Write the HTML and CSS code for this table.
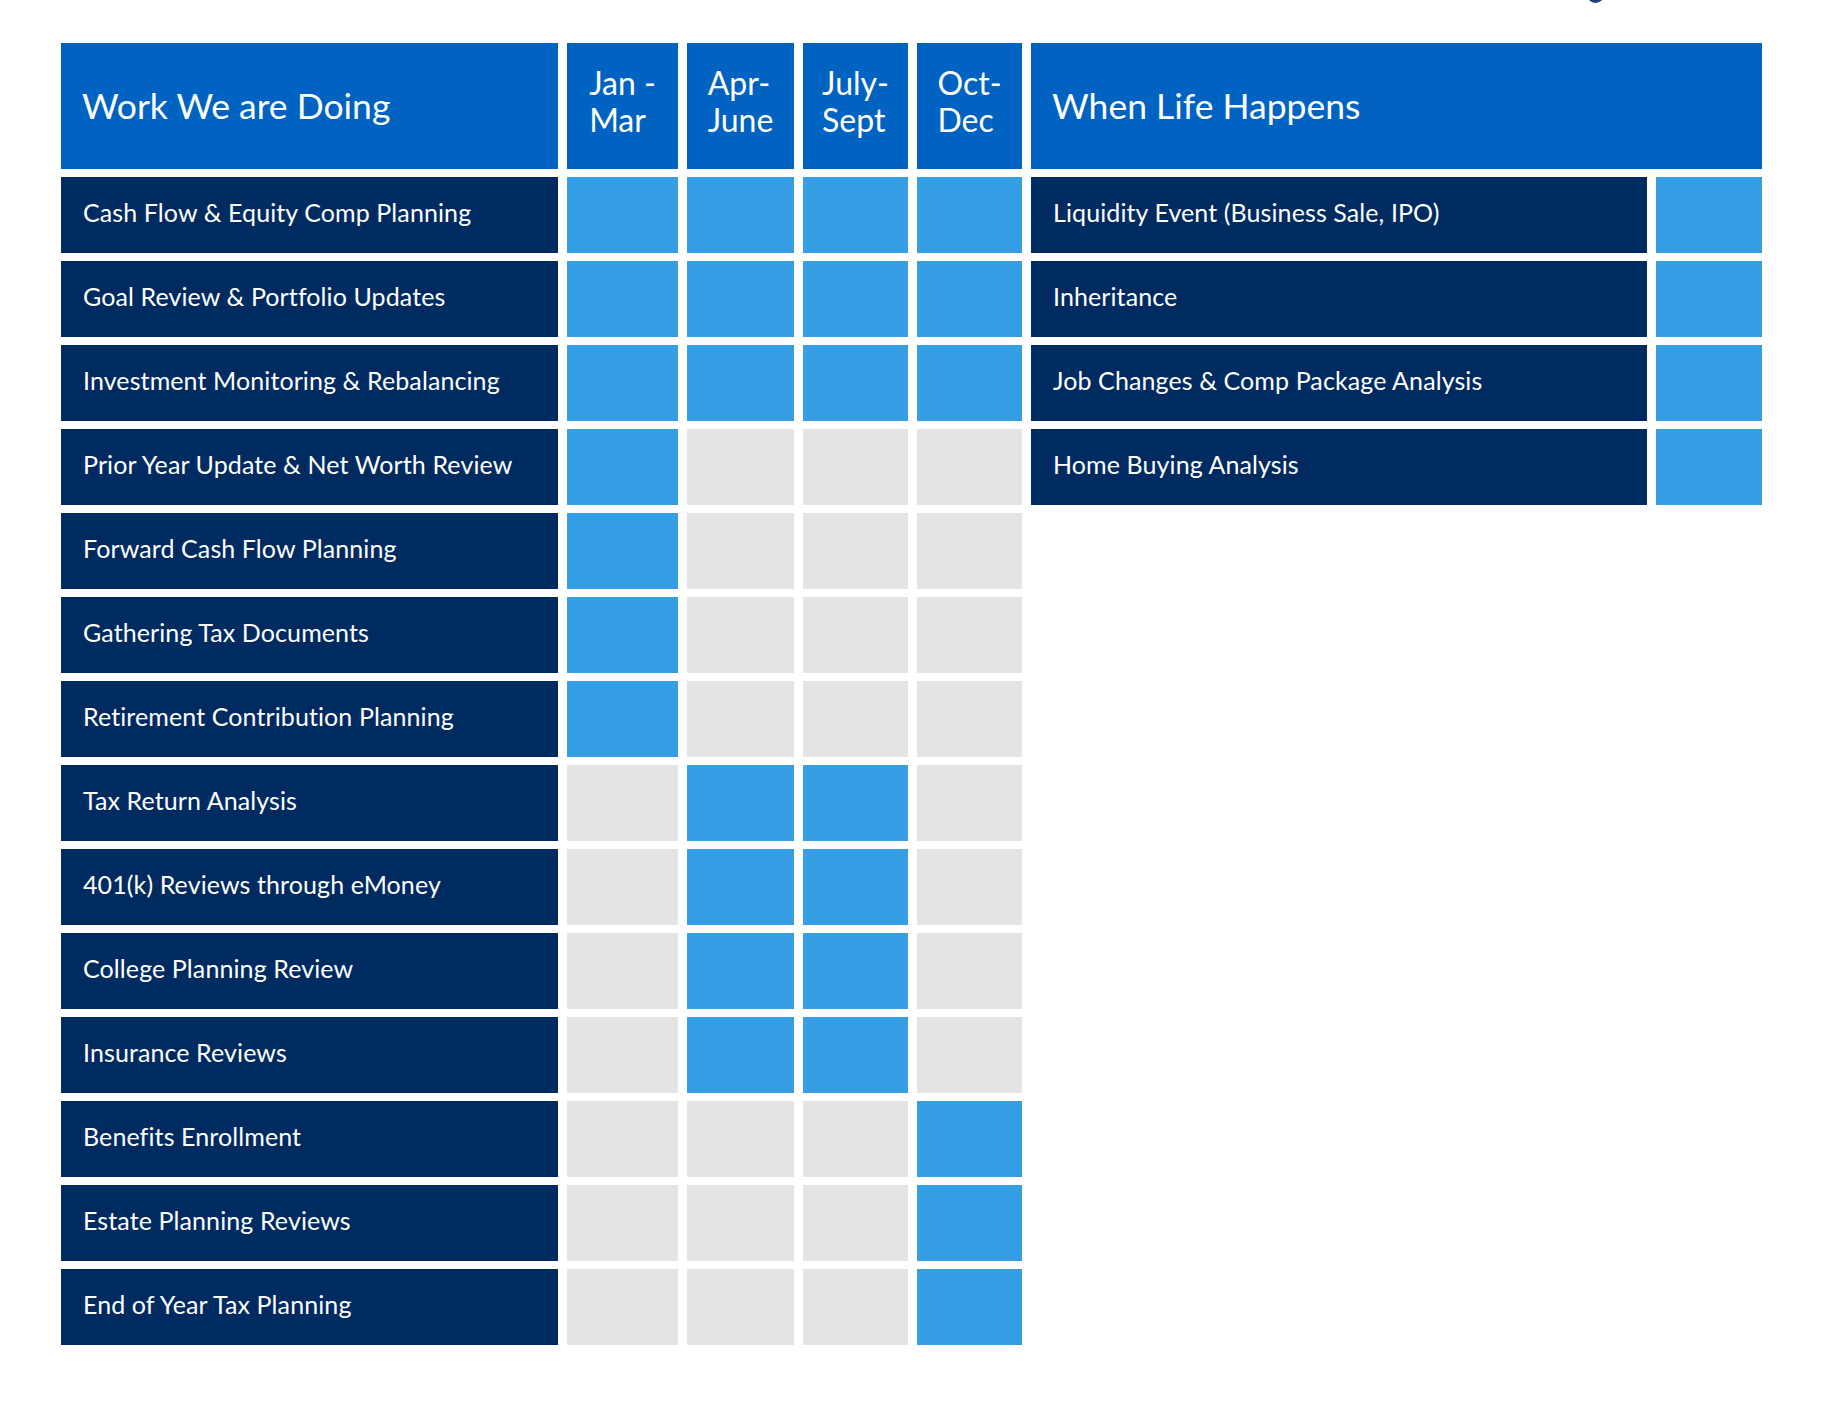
FILE: index.html
```html
<!DOCTYPE html>
<html lang="en">
<head>
<meta charset="utf-8">
<title>Work We are Doing</title>
<link rel="stylesheet" href="styles.css">
</head>
<body>
<div class="logo-fragment"></div>
<main class="chart">
  <section class="work">
    <div class="head head-title">Work We are Doing</div>
    <div class="head head-month"><span>Jan -<br>Mar</span></div>
    <div class="head head-month"><span>Apr-<br>June</span></div>
    <div class="head head-month"><span>July-<br>Sept</span></div>
    <div class="head head-month"><span>Oct-<br>Dec</span></div>

    <div class="name">Cash Flow &amp; Equity Comp Planning</div>
    <div class="cell on"></div><div class="cell on"></div><div class="cell on"></div><div class="cell on"></div>

    <div class="name">Goal Review &amp; Portfolio Updates</div>
    <div class="cell on"></div><div class="cell on"></div><div class="cell on"></div><div class="cell on"></div>

    <div class="name">Investment Monitoring &amp; Rebalancing</div>
    <div class="cell on"></div><div class="cell on"></div><div class="cell on"></div><div class="cell on"></div>

    <div class="name">Prior Year Update &amp; Net Worth Review</div>
    <div class="cell on"></div><div class="cell"></div><div class="cell"></div><div class="cell"></div>

    <div class="name">Forward Cash Flow Planning</div>
    <div class="cell on"></div><div class="cell"></div><div class="cell"></div><div class="cell"></div>

    <div class="name">Gathering Tax Documents</div>
    <div class="cell on"></div><div class="cell"></div><div class="cell"></div><div class="cell"></div>

    <div class="name">Retirement Contribution Planning</div>
    <div class="cell on"></div><div class="cell"></div><div class="cell"></div><div class="cell"></div>

    <div class="name">Tax Return Analysis</div>
    <div class="cell"></div><div class="cell on"></div><div class="cell on"></div><div class="cell"></div>

    <div class="name">401(k) Reviews through eMoney</div>
    <div class="cell"></div><div class="cell on"></div><div class="cell on"></div><div class="cell"></div>

    <div class="name">College Planning Review</div>
    <div class="cell"></div><div class="cell on"></div><div class="cell on"></div><div class="cell"></div>

    <div class="name">Insurance Reviews</div>
    <div class="cell"></div><div class="cell on"></div><div class="cell on"></div><div class="cell"></div>

    <div class="name">Benefits Enrollment</div>
    <div class="cell"></div><div class="cell"></div><div class="cell"></div><div class="cell on"></div>

    <div class="name">Estate Planning Reviews</div>
    <div class="cell"></div><div class="cell"></div><div class="cell"></div><div class="cell on"></div>

    <div class="name">End of Year Tax Planning</div>
    <div class="cell"></div><div class="cell"></div><div class="cell"></div><div class="cell on"></div>
  </section>

  <section class="life">
    <div class="head head-title head-wide">When Life Happens</div>

    <div class="name">Liquidity Event (Business Sale, IPO)</div>
    <div class="cell on"></div>

    <div class="name">Inheritance</div>
    <div class="cell on"></div>

    <div class="name">Job Changes &amp; Comp Package Analysis</div>
    <div class="cell on"></div>

    <div class="name">Home Buying Analysis</div>
    <div class="cell on"></div>
  </section>
</main>
</body>
</html>
```

FILE: styles.css
```css
html, body {
  margin: 0;
  padding: 0;
  background: #ffffff;
}

body {
  font-family: Lato, "Noto Sans", "Liberation Sans", sans-serif;
  color: #ffffff;
  position: relative;
  min-height: 1410px;
}

.logo-fragment {
  position: absolute;
  left: 1587px;
  top: -14px;
  width: 17px;
  height: 17px;
  border-radius: 50%;
  background: #1d3f78;
}

.chart {
  display: flex;
  align-items: flex-start;
  gap: 9px;
  padding: 43px 0 0 61px;
}

.work {
  display: grid;
  grid-template-columns: 497px 111px 107px 105px 105px;
  grid-template-rows: 126px;
  grid-auto-rows: 76px;
  gap: 8px 9px;
}

.life {
  display: grid;
  grid-template-columns: 616px 106px;
  grid-template-rows: 126px;
  grid-auto-rows: 76px;
  gap: 8px 9px;
}

.head {
  background: #0063c1;
  display: flex;
  align-items: center;
}

.head-title {
  font-size: 35.5px;
  padding-left: 21px;
  padding-bottom: 2px;
  box-sizing: border-box;
}

.head-wide {
  grid-column: span 2;
}

.head-month {
  justify-content: center;
  font-size: 32px;
  line-height: 37px;
  padding-bottom: 10px;
  box-sizing: border-box;
}

.head-month span {
  display: inline-block;
  text-align: left;
}

.name {
  background: #002b60;
  display: flex;
  align-items: center;
  padding-left: 22px;
  padding-bottom: 6px;
  box-sizing: border-box;
  font-size: 25px;
  letter-spacing: 0.1px;
}

.cell {
  background: #e4e4e4;
}

.cell.on {
  background: #359ee4;
}
```
